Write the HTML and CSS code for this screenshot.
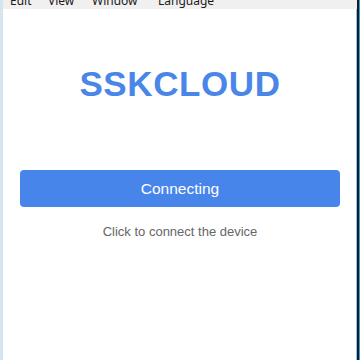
FILE: index.html
```html
<!DOCTYPE html>
<html>
<head>
<meta charset="utf-8">
<link rel="stylesheet" href="styles.css">
</head>
<body>
<div class="window">
  <div class="menubar">
    <span class="menu-item">Edit</span>
    <span class="menu-item">View</span>
    <span class="menu-item">Window</span>
    <span class="menu-item">Language</span>
  </div>
  <div class="content">
    <h1 class="brand">SSKCLOUD</h1>
    <button class="connect-btn">Connecting</button>
    <p class="hint">Click to connect the device</p>
  </div>
</div>
</body>
</html>
```
FILE: styles.css
```css
html, body {
  margin: 0;
  padding: 0;
  width: 360px;
  height: 360px;
  overflow: hidden;
  background: #ffffff;
}
.window {
  box-sizing: border-box;
  width: 360px;
  height: 360px;
  border-left: 3px solid #d6e4f0;
  border-right: 3px solid #1a1a1a;
  box-shadow: inset -1px 0 0 #8fc3ea;
  display: flex;
  flex-direction: column;
  font-family: "Liberation Sans", Arial, sans-serif;
  position: relative;
}
.window::after {
  content: "";
  position: absolute;
  top: 0;
  bottom: 0;
  right: -3px;
  width: 1px;
  background: #2aa0e0;
}
.menubar {
  height: 9px;
  background: #f0f0f0;
  display: flex;
  align-items: flex-end;
  overflow: hidden;
  padding-left: 7px;
  font-family: "Noto Sans", "Liberation Sans", sans-serif;
  font-size: 12px;
  color: #1a1a1a;
}
.menu-item {
  display: block;
  line-height: 12px;
  margin-bottom: 2px;
  padding: 0 10px 0 0;
}
.menu-item:nth-child(1) { width: 28px; }
.menu-item:nth-child(2) { width: 34px; }
.menu-item:nth-child(3) { width: 56px; }
.content {
  flex: 1;
  display: flex;
  flex-direction: column;
  align-items: center;
  padding: 0 17px;
}
.brand {
  margin: 55px 0 0 0;
  font-size: 35px;
  line-height: 40px;
  font-weight: bold;
  color: #4a86e8;
  letter-spacing: 0.6px;
}
.connect-btn {
  margin-top: 66px;
  width: 320px;
  height: 37px;
  border: none;
  border-radius: 4px;
  background: #4785eb;
  color: #ffffff;
  font-family: "Liberation Sans", Arial, sans-serif;
  font-size: 15.5px;
  padding: 0;
}
.hint {
  margin: 17px 0 0 0;
  font-size: 13px;
  line-height: 16px;
  color: #666666;
}
```
